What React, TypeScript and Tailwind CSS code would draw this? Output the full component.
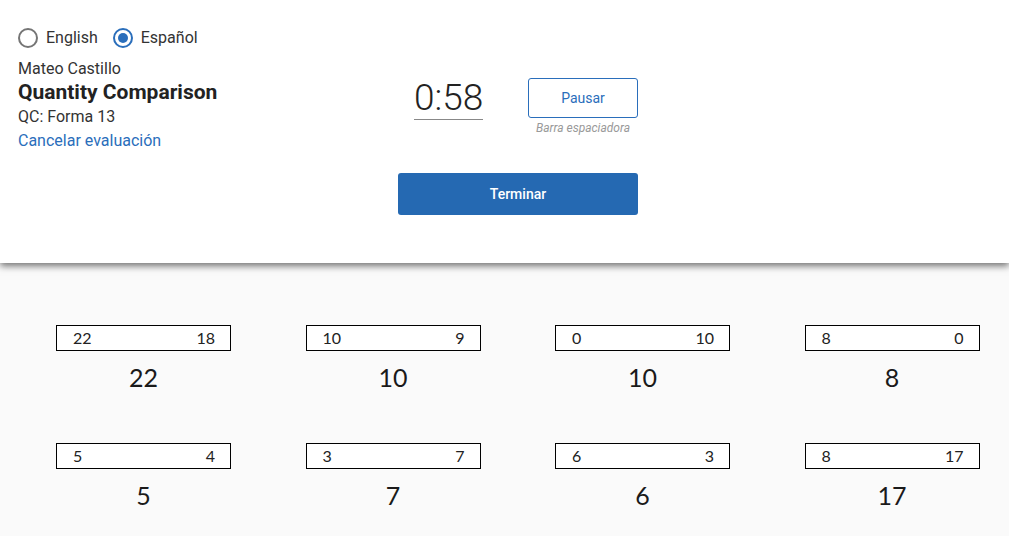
import React from 'react'

const rows = [
  [
    { left: '22', right: '18', answer: '22' },
    { left: '10', right: '9', answer: '10' },
    { left: '0', right: '10', answer: '10' },
    { left: '8', right: '0', answer: '8' },
  ],
  [
    { left: '5', right: '4', answer: '5' },
    { left: '3', right: '7', answer: '7' },
    { left: '6', right: '3', answer: '6' },
    { left: '8', right: '17', answer: '17' },
  ],
]

function Radio({ label, checked }: { label: string; checked?: boolean }) {
  return (
    <label className="flex items-center gap-[8px] cursor-pointer">
      <span
        className={`w-[20px] h-[20px] rounded-full border-2 flex items-center justify-center ${
          checked ? 'border-[#2a6ebb]' : 'border-[#757575]'
        }`}
      >
        {checked && <span className="w-[10px] h-[10px] rounded-full bg-[#2a6ebb]" />}
      </span>
      <span className="text-[16px] text-[#333]">{label}</span>
    </label>
  )
}

function Item({ left, right, answer }: { left: string; right: string; answer: string }) {
  return (
    <div className="w-[175px] flex flex-col items-center">
      <div className="w-full h-[26px] border border-black bg-white flex items-center justify-between pl-[16px] pr-[15px] text-[16px] text-[#222]">
        <span>{left}</span>
        <span>{right}</span>
      </div>
      <div className="mt-[10px] text-[25px] leading-[32px] text-[#1a1a1a]">{answer}</div>
    </div>
  )
}

export default function App() {
  return (
    <div className="w-[1009px] h-[536px] overflow-hidden bg-[#fafafa] font-['Roboto',sans-serif]">
      {/* Header */}
      <div className="relative z-10 h-[263px] bg-white shadow-[0_3px_7px_rgba(0,0,0,0.55)] pl-[18px] pt-[26px]">
        <div className="flex gap-[15px]">
          <Radio label="English" />
          <Radio label="Español" checked />
        </div>
        <div className="flex">
          <div className="w-[380px] pt-[8px]">
            <div className="text-[16px] leading-[21px] text-[#333]">Mateo Castillo</div>
            <div className="text-[21px] leading-[27px] font-bold text-[#222]">Quantity Comparison</div>
            <div className="text-[16px] leading-[21px] text-[#333]">QC: Forma 13</div>
            <div className="text-[16px] leading-[27px] text-[#2a6ebb]">Cancelar evaluación</div>
          </div>
          <div className="flex flex-col">
            <div className="flex items-start pt-[28px]">
              <div className="ml-[16px] w-[69px] border-b border-[#888] text-[37px] leading-[40px] font-light text-[#222] text-center pb-[1px]">
                0:58
              </div>
              <div className="ml-[45px] flex flex-col items-center">
                <button className="w-[110px] h-[40px] border border-[#2a6ebb] rounded-[3px] bg-white text-[14px] text-[#2a6ebb]">
                  Pausar
                </button>
                <span className="mt-[1px] text-[12px] italic text-[#999]">Barra espaciadora</span>
              </div>
            </div>
            <button className="mt-[36px] w-[240px] h-[42px] rounded-[3px] bg-[#2569b2] text-white text-[14px] font-medium">
              Terminar
            </button>
          </div>
        </div>
      </div>

      {/* Items */}
      <div className="pt-[62px] pl-[56px] flex flex-col gap-[50px] font-['Lato',sans-serif]">
        {rows.map((row, i) => (
          <div key={i} className="flex gap-x-[74.5px]">
            {row.map((it, j) => (
              <Item key={j} {...it} />
            ))}
          </div>
        ))}
      </div>
    </div>
  )
}
